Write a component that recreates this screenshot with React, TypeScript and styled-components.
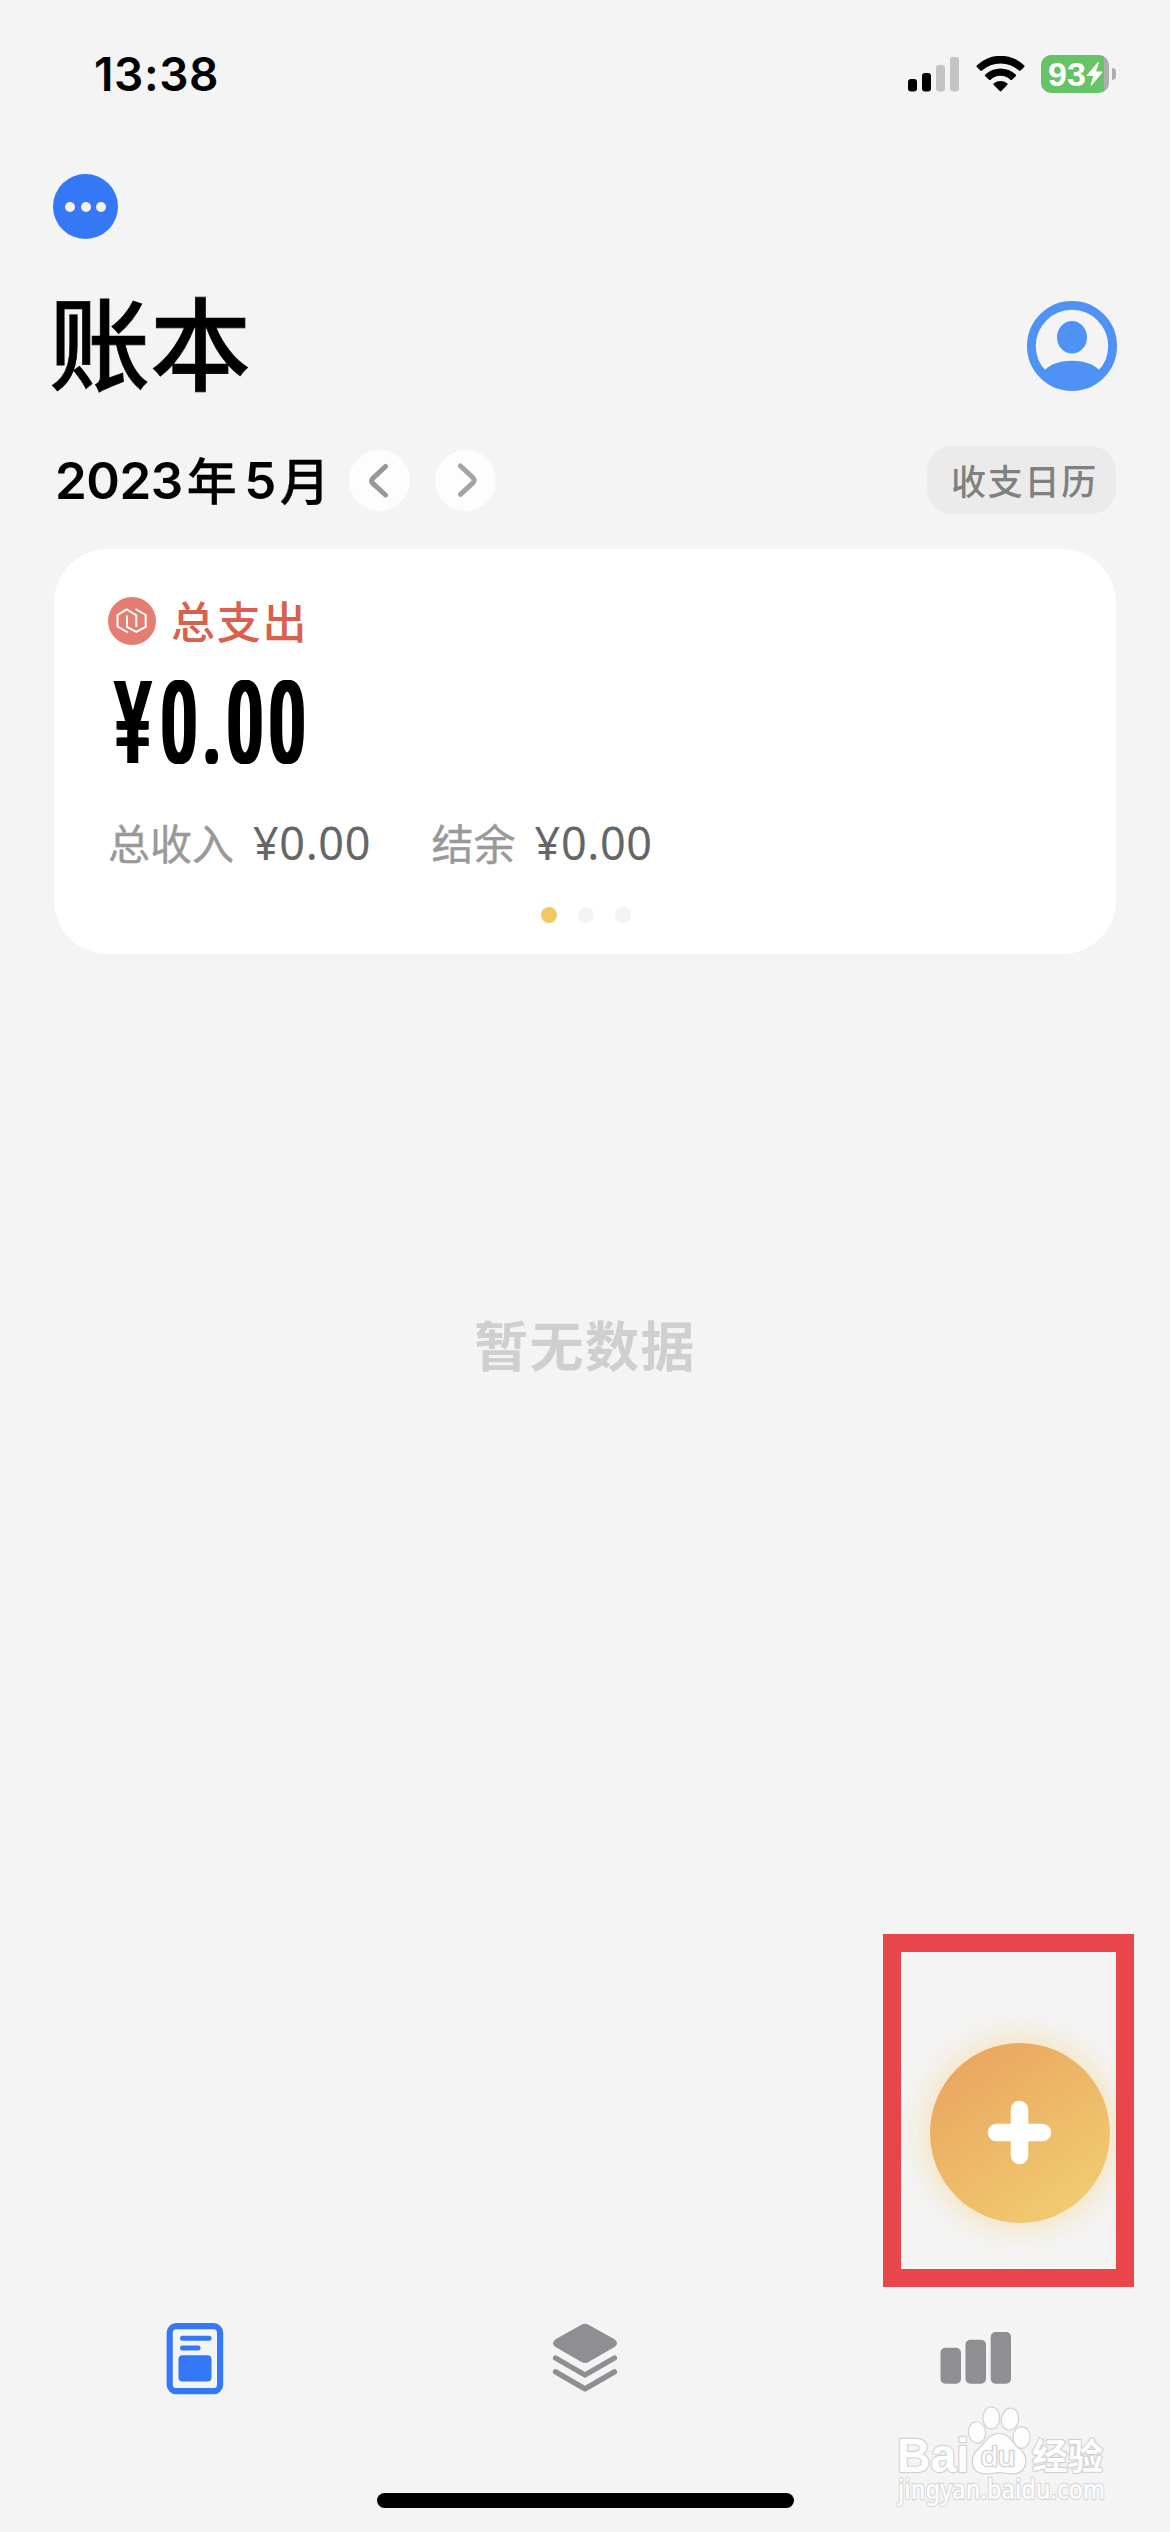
import React from "react";
import styled, { createGlobalStyle } from "styled-components";

const GlobalStyle = createGlobalStyle`
  * { box-sizing: border-box; }
  body { margin: 0; background: #f4f4f4; }
`;

const latin = `Inter, "Noto Sans CJK SC", sans-serif`;
const cjk = `"Noto Sans CJK SC", sans-serif`;

const Screen = styled.main`
  position: relative;
  display: flex;
  flex-direction: column;
  width: 1170px;
  height: 2532px;
  overflow: hidden;
  background: #f4f4f4;
  color: #000;
  font-family: ${cjk};
`;

const StatusBar = styled.header`
  display: flex;
  align-items: center;
  justify-content: space-between;
  height: 148px;
  padding: 0 54px 0 94px;
`;

const Clock = styled.time`
  font: 600 46px/1 ${latin};
  letter-spacing: 0.6px;
`;

const StatusIcons = styled.div`
  display: flex;
  align-items: center;
`;

const BatteryGroup = styled.div`
  display: flex;
  align-items: center;
  gap: 3px;
  margin-left: 16px;
`;

const Battery = styled.div`
  display: flex;
  align-items: center;
  width: 68px;
  height: 38px;
  padding-left: 7px;
  border-radius: 10px;
  background: linear-gradient(90deg, #65c466 63px, #aeaeae 63px);
  color: #fff;
  font: 700 34px/38px "Liberation Sans", Arial, sans-serif;
`;

const BatteryCap = styled.span`
  width: 4px;
  height: 12px;
  border-radius: 0 6px 6px 0;
  background: #aeaeae;
`;

const MenuRow = styled.div`
  display: flex;
  align-items: center;
  height: 117px;
  padding: 0 53px;
`;

const MoreButton = styled.button`
  display: flex;
  align-items: center;
  justify-content: center;
  gap: 5.4px;
  width: 65px;
  height: 65px;
  padding: 0;
  border: 0;
  border-radius: 50%;
  background: #3478f6;
`;

const MoreDot = styled.span`
  width: 10px;
  height: 10px;
  border-radius: 50%;
  background: #f4f4f4;
`;

const TitleRow = styled.div`
  display: flex;
  align-items: center;
  justify-content: space-between;
  height: 162px;
  padding: 0 53px 0 49px;
`;

const Title = styled.h1`
  margin: 0;
  padding-bottom: 13px;
  font: 500 101px/1 ${cjk};
  -webkit-text-stroke: 0.7px #000;
`;

const MonthRow = styled.div`
  display: flex;
  align-items: center;
  height: 106px;
  padding: 0 54px 0 55px;
`;

const Month = styled.h2`
  display: flex;
  align-items: center;
  width: 294px;
  margin: 0;
  font: 600 51px/1 ${latin};
  letter-spacing: -0.5px;
  white-space: nowrap;
`;

const MonthUnit = styled.span<{ $before?: number; $after?: number }>`
  margin-left: ${(p) => p.$before ?? 0}px;
  margin-right: ${(p) => p.$after ?? 0}px;
  padding-bottom: 5px;
  font: 500 50px/1 ${cjk};
  -webkit-text-stroke: 0.4px #000;
`;

const StepButton = styled.button`
  display: flex;
  align-items: center;
  justify-content: center;
  width: 61px;
  height: 61px;
  margin-right: 25px;
  padding: 1px 0 0;
  border: 0;
  border-radius: 50%;
  background: #fdfdfd;
`;

const CalendarButton = styled.button`
  width: 189px;
  height: 68px;
  margin-left: auto;
  padding: 0 0 0 6px;
  border: 0;
  border-radius: 25px;
  background: #ebebeb;
  color: #808080;
  font: 500 35px/66px ${cjk};
  letter-spacing: 1.7px;
`;

const SummaryCard = styled.section`
  display: flex;
  flex-direction: column;
  height: 405px;
  margin: 16px 54px 0;
  padding: 42px 54px 0;
  border-radius: 54px;
  background: #fff;
`;

const ExpenseLabel = styled.div`
  display: flex;
  align-items: center;
  gap: 15px;
  height: 60px;
  color: #d9604c;
  font: 500 44px/1 ${cjk};
  letter-spacing: 1.8px;
`;

const ExpenseName = styled.span`
  padding-bottom: 3px;
`;

const AmountRow = styled.div`
  display: flex;
  align-items: center;
  height: 142px;
  padding: 2px 0 0 5px;
`;

const Amount = styled.strong`
  font: 500 115px/1 Roboto, sans-serif;
  letter-spacing: 12.5px;
  text-shadow: 2px 0 #000, 4px 0 #000, 6px 0 #000, 8px 0 #000;
  transform: scaleX(0.54);
  transform-origin: left center;
`;

const Currency = styled.span`
  display: inline-block;
  margin-right: 12px;
  text-shadow: 2px 0 #000, 4px 0 #000;
  transform: scaleX(1.13);
  transform-origin: left center;
`;

const Totals = styled.dl`
  display: flex;
  align-items: center;
  height: 100px;
  margin: 0;
`;

const TotalName = styled.dt`
  padding-bottom: 3px;
  color: #999;
  font: 400 42px/1 ${cjk};
  -webkit-text-stroke: 0.4px #999;
`;

const TotalValue = styled.dd`
  margin: 0 60.5px 0 19px;
  padding-bottom: 2px;
  color: #666;
  font: 400 45px/1 "Noto Sans", sans-serif;
  letter-spacing: 0.6px;
`;

const Pager = styled.div`
  display: flex;
  align-items: center;
  justify-content: center;
  gap: 21px;
  height: 44px;
  padding-left: 2px;
`;

const PagerDot = styled.span<{ $active?: boolean }>`
  width: 16px;
  height: 16px;
  border-radius: 50%;
  background: ${(p) => (p.$active ? "#f1c962" : "#f3f3f3")};
`;

const Empty = styled.section`
  flex: 1;
  padding-top: 350px;
  color: #cfcfcf;
  text-align: center;
  font: 700 54px/80px ${cjk};
  letter-spacing: 1.5px;
`;

const TabBar = styled.nav`
  display: grid;
  grid-template-columns: repeat(3, 1fr);
  height: 120px;
  padding-top: 3px;
`;

const Tab = styled.a`
  display: flex;
  align-items: center;
  justify-content: center;
`;

const HomeArea = styled.footer`
  display: flex;
  justify-content: center;
  height: 115px;
  padding-top: 76px;
`;

const HomeIndicator = styled.div`
  width: 417px;
  height: 15px;
  border-radius: 8px;
  background: #000;
`;

const AddButton = styled.button`
  position: absolute;
  left: 930px;
  top: 2043px;
  display: flex;
  align-items: center;
  justify-content: center;
  width: 180px;
  height: 180px;
  padding: 0 1px 1px 0;
  border: 0;
  border-radius: 50%;
  background: linear-gradient(145deg, #e9a55f 8%, #f1cd72 92%);
  box-shadow: 0 0 34px rgba(246, 205, 115, 0.6);
`;

const Highlight = styled.div`
  position: absolute;
  left: 883px;
  top: 1934px;
  width: 251px;
  height: 353px;
  border: 18px solid #e9464b;
  pointer-events: none;
`;

const Watermark = styled.svg`
  position: absolute;
  left: 890px;
  top: 2395px;
  width: 220px;
  height: 120px;
  overflow: visible;
`;

const Signal = () => (
  <svg width="52" height="36" viewBox="0 0 52 36">
    <rect y="23" width="9" height="12.5" rx="3" />
    <rect x="14" y="17" width="9" height="18.5" rx="3" />
    <rect x="28" y="9" width="9" height="26.5" rx="3" fill="#c4c4c4" />
    <rect x="42" y="1" width="9" height="34.5" rx="3" fill="#c4c4c4" />
  </svg>
);

const WifiSvg = styled.svg`
  margin-left: 16px;
`;

const Wifi = () => (
  <WifiSvg width="49" height="36" viewBox="0 0 49 36">
    <path d="M1 11.2Q0 10.2 1 9.2A34 34 0 0 1 48 9.2Q49 10.2 48 11.2L44.6 14.6Q43.8 15.4 43 14.6A27.5 27.5 0 0 0 6 14.6Q5.2 15.4 4.4 14.6Z" />
    <path d="M9.3 20.3Q8.4 19.4 9.3 18.5A22 22 0 0 1 39.7 18.5Q40.6 19.4 39.7 20.3L36 23.7Q35.2 24.5 34.4 23.7A14.5 14.5 0 0 0 14.6 23.7Q13.8 24.5 13 23.7Z" />
    <path d="M17.6 28.8Q16.8 28 17.8 27.2A11 11 0 0 1 31.2 27.2Q32.2 28 31.4 28.8L25.3 35Q24.5 35.8 23.7 35Z" />
  </WifiSvg>
);

const Bolt = () => (
  <svg width="17" height="26" viewBox="0 0 17.5 26" fill="#fff">
    <path d="M12 .8L.8 14.2Q.4 15 1.2 15H7.4L4.7 24.2Q4.6 25.6 5.8 24.8L16.8 11.4Q17.3 10.5 16.3 10.5H10.4L13.3 1.6Q13.2.2 12 .8Z" />
  </svg>
);

const Avatar = () => (
  <svg width="90" height="90" viewBox="0 0 90 90" fill="#4e92f5">
    <circle cx="45" cy="45" r="40.6" fill="none" stroke="#4e92f5" strokeWidth="8.8" />
    <ellipse cx="45" cy="36.3" rx="15" ry="16.3" />
    <path d="M17.5 69.3C24 62.5 34 59.7 45 59.7S66 62.5 72.5 69.3L74 76Q62 88 45 88T16 76Z" />
  </svg>
);

const Chevron = ({ next = false }: { next?: boolean }) => (
  <svg width="24" height="36" viewBox="0 0 24 36" fill="none" strokeWidth="5" strokeLinecap="round" strokeLinejoin="round">
    {next ? (
      <path d="M6.5 3L19 14.8Q21.5 17.3 19 19.8L6.5 31.3" stroke="#a3a3a3" />
    ) : (
      <path d="M17.5 3.5L4.8 15.4Q2.3 17.9 4.8 20.4L17.5 32" stroke="#979797" />
    )}
  </svg>
);

const ExpenseIcon = () => (
  <svg width="48" height="48" viewBox="0 0 48 48">
    <circle cx="24" cy="24" r="24" fill="#e57e72" />
    <g fill="none" stroke="#fff" strokeWidth="2" strokeLinejoin="miter">
      <path d="M20 35.5L9.5 29.5V18L18.8 12.5L28.3 18.3V30" />
      <path d="M27.5 12L37.7 18V29.8L28.2 34.8L19 29.8V18.5" />
    </g>
  </svg>
);

const LedgerIcon = () => (
  <svg width="58" height="72" viewBox="0 0 58 72" fill="#3478f6">
    <rect x="3.7" y="3.2" width="50.4" height="65" rx="6.5" fill="none" stroke="#3478f6" strokeWidth="6.2" />
    <rect x="14" y="12.8" width="31.5" height="5" rx="2.5" />
    <rect x="14" y="22.5" width="20.5" height="5" rx="2.5" />
    <rect x="12.5" y="32.2" width="33" height="26.3" rx="4" />
  </svg>
);

const LayersIcon = () => (
  <svg width="66" height="72" viewBox="0 0 66 72" fill="#8e8e93">
    <path d="M29.5 1.8Q33 -.2 36.5 1.8L62.5 16.3Q67.5 20.2 62.5 24.1L36.5 38.9Q33 40.9 29.5 38.9L3.5 24.1Q-1.5 20.2 3.5 16.3Z" />
    <g fill="none" stroke="#8e8e93" strokeWidth="5.4" strokeLinecap="round" strokeLinejoin="round">
      <path d="M3.6 35L33 52L62.4 35" />
      <path d="M3.6 48.8L33 65.8L62.4 48.8" />
    </g>
  </svg>
);

const BarsIcon = () => (
  <svg width="71" height="54" viewBox="0 0 71 54" fill="#8e8e93">
    <rect x=".5" y="15.8" width="20.5" height="36" rx="5" />
    <rect x="25.5" y="7.8" width="20.5" height="44" rx="5" />
    <rect x="50.7" y="0" width="20.3" height="51.8" rx="5" />
  </svg>
);

const SourceMark = () => (
  <Watermark viewBox="0 0 220 120" fill="#fdfdfd" stroke="#d2d2d2" strokeWidth="2.4" paintOrder="stroke" strokeLinejoin="round">
    <text x="7" y="76.5" textLength="72" lengthAdjust="spacingAndGlyphs" fontFamily="Liberation Sans, sans-serif" fontWeight="700" fontSize="48">Bai</text>
    <ellipse cx="87" cy="37.5" rx="8" ry="10.2" transform="rotate(-8 87 37.5)" />
    <ellipse cx="101.3" cy="23" rx="7.8" ry="10.6" />
    <ellipse cx="120" cy="24.2" rx="8" ry="10.5" transform="rotate(10 120 24.2)" />
    <ellipse cx="131.5" cy="42.5" rx="8" ry="10.2" />
    <path d="M109 39C98 39 96 49 88 55C80 62 81 77 93 78C101 79 104 77 109 77C115 77 119 79 126 78C137 76 138 61 130 55C122 49 120 39 109 39Z" />
    <text x="91" y="71" textLength="34" lengthAdjust="spacingAndGlyphs" fontFamily="Liberation Sans, sans-serif" fontWeight="400" fontSize="27" strokeWidth="2.6">du</text>
    <text x="142" y="74.5" textLength="71" lengthAdjust="spacingAndGlyphs" fontFamily="Noto Sans CJK SC, sans-serif" fontWeight="700" fontSize="36">经验</text>
    <text x="8" y="104" textLength="207" lengthAdjust="spacingAndGlyphs" fontFamily="Noto Sans, sans-serif" fontWeight="500" fontSize="27" stroke="#d8d8d8">jingyan.baidu.com</text>
  </Watermark>
);

export default function App() {
  return (
    <Screen>
      <GlobalStyle />
      <StatusBar>
        <Clock>13:38</Clock>
        <StatusIcons>
          <Signal />
          <Wifi />
          <BatteryGroup>
            <Battery>93<Bolt /></Battery>
            <BatteryCap />
          </BatteryGroup>
        </StatusIcons>
      </StatusBar>
      <MenuRow>
        <MoreButton aria-label="更多"><MoreDot /><MoreDot /><MoreDot /></MoreButton>
      </MenuRow>
      <TitleRow>
        <Title>账本</Title>
        <Avatar />
      </TitleRow>
      <MonthRow>
        <Month>2023<MonthUnit $before={4} $after={8}>年</MonthUnit>5<MonthUnit $before={4}>月</MonthUnit></Month>
        <StepButton><Chevron /></StepButton>
        <StepButton><Chevron next /></StepButton>
        <CalendarButton>收支日历</CalendarButton>
      </MonthRow>
      <SummaryCard>
        <ExpenseLabel><ExpenseIcon /><ExpenseName>总支出</ExpenseName></ExpenseLabel>
        <AmountRow><Amount><Currency>¥</Currency>0.00</Amount></AmountRow>
        <Totals>
          <TotalName>总收入</TotalName>
          <TotalValue>¥0.00</TotalValue>
          <TotalName>结余</TotalName>
          <TotalValue>¥0.00</TotalValue>
        </Totals>
        <Pager><PagerDot $active /><PagerDot /><PagerDot /></Pager>
      </SummaryCard>
      <Empty>暂无数据</Empty>
      <TabBar>
        <Tab><LedgerIcon /></Tab>
        <Tab><LayersIcon /></Tab>
        <Tab><BarsIcon /></Tab>
      </TabBar>
      <HomeArea><HomeIndicator /></HomeArea>
      <AddButton aria-label="记一笔">
        <svg width="66" height="66" viewBox="0 0 66 66" fill="none" stroke="#fff" strokeWidth="17.5" strokeLinecap="round">
          <path d="M32.5 9.5V55.5M9.5 32.5H55.5" />
        </svg>
      </AddButton>
      <Highlight />
      <SourceMark />
    </Screen>
  );
}
